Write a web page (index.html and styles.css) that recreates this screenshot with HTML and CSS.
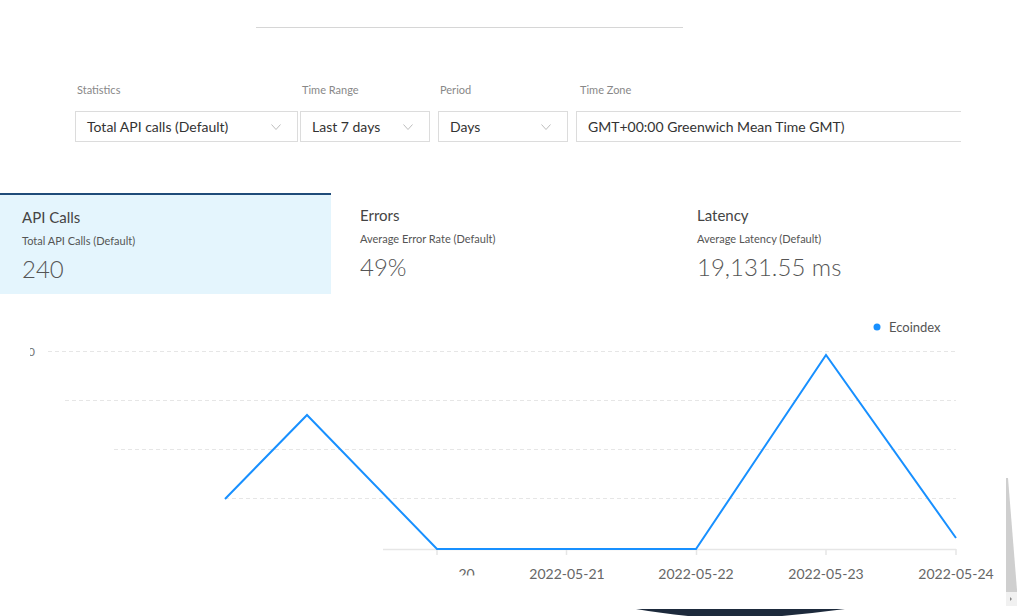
FILE: index.html
```html
<!DOCTYPE html>
<html>
<head>
<meta charset="utf-8">
<link rel="stylesheet" href="styles.css">
</head>
<body>
<div class="topline"></div>

<div class="filters">
  <div class="field">
    <div class="label">Statistics</div>
    <div class="select s-stat"><span>Total API calls (Default)</span><svg class="chev" width="10" height="6" viewBox="0 0 10 6"><polyline points="0.5,0.5 5,5.5 9.5,0.5"/></svg></div>
  </div>
  <div class="field">
    <div class="label">Time Range</div>
    <div class="select s-small"><span>Last 7 days</span><svg class="chev" width="10" height="6" viewBox="0 0 10 6"><polyline points="0.5,0.5 5,5.5 9.5,0.5"/></svg></div>
  </div>
  <div class="field">
    <div class="label">Period</div>
    <div class="select s-small"><span>Days</span><svg class="chev" width="10" height="6" viewBox="0 0 10 6"><polyline points="0.5,0.5 5,5.5 9.5,0.5"/></svg></div>
  </div>
  <div class="field">
    <div class="label label-tz">Time Zone</div>
    <div class="select s-tz"><span>GMT+00:00 Greenwich Mean Time GMT)</span></div>
  </div>
</div>

<div class="tabs">
  <div class="tab tab-active">
    <div class="tab-title">API Calls</div>
    <div class="tab-sub">Total API Calls (Default)</div>
    <div class="tab-value">240</div>
  </div>
  <div class="tab">
    <div class="tab-title">Errors</div>
    <div class="tab-sub">Average Error Rate (Default)</div>
    <div class="tab-value">49%</div>
  </div>
  <div class="tab">
    <div class="tab-title">Latency</div>
    <div class="tab-sub">Average Latency (Default)</div>
    <div class="tab-value">19,131.55 ms</div>
  </div>
</div>

<svg class="chart" width="1018" height="322" viewBox="0 294 1018 322">
  <defs>
    <clipPath id="clipY"><rect x="30" y="340" width="10" height="20"/></clipPath>
    <clipPath id="clipX"><rect x="458" y="560" width="30" height="15.5"/></clipPath>
  </defs>
  <circle cx="877" cy="327" r="3.5" fill="#1890ff"/>
  <text x="889" y="332" class="legend">Ecoindex</text>

  <text x="35" y="356" class="ylab" clip-path="url(#clipY)" text-anchor="end">0</text>

  <g class="grid">
    <line x1="48" y1="351.5" x2="956" y2="351.5"/>
    <line x1="65" y1="400.5" x2="956" y2="400.5"/>
    <line x1="114" y1="449.5" x2="956" y2="449.5"/>
    <line x1="225" y1="498.5" x2="956" y2="498.5"/>
  </g>
  <g class="axis">
    <line x1="383" y1="549.5" x2="956" y2="549.5"/>
    <line x1="437" y1="549" x2="437" y2="555"/>
    <line x1="566.5" y1="549" x2="566.5" y2="555"/>
    <line x1="696.5" y1="549" x2="696.5" y2="555"/>
    <line x1="826" y1="549" x2="826" y2="555"/>
    <line x1="956" y1="549" x2="956" y2="555"/>
  </g>
  <polyline class="series" points="225,499 307,415 437,549 696,549 826,355 956,538"/>

  <g class="xlab">
    <text x="437" y="579" text-anchor="middle" clip-path="url(#clipX)">2022-05-20</text>
    <text x="567" y="579" text-anchor="middle">2022-05-21</text>
    <text x="696" y="579" text-anchor="middle">2022-05-22</text>
    <text x="826" y="579" text-anchor="middle">2022-05-23</text>
    <text x="956" y="579" text-anchor="middle">2022-05-24</text>
  </g>

  <path class="navy" d="M636 609 L845 609 Q 815 613 782 616 L688 616 Q 660 613 636 609 Z"/>
  <path class="scroll" d="M1006 478 L1008 478 L1017 590 L1017 606 L1006 606 Z"/>
  <rect x="1006" y="592" width="11" height="14" fill="#f1f1f1"/>
  <path d="M1010 597 L1012 599 L1010 601 Z" fill="#888"/>
</svg>
</body>
</html>
```

FILE: styles.css
```css
html, body {
  margin: 0;
  padding: 0;
}
body {
  width: 1018px;
  height: 616px;
  overflow: hidden;
  background: #ffffff;
  font-family: Lato, "Noto Sans", "Liberation Sans", sans-serif;
  color: #333;
}
.topline {
  margin: 27px 0 0 256px;
  width: 427px;
  height: 1px;
  background: #d6d6d6;
}
.filters {
  display: grid;
  grid-template-columns: 225px 138px 138px 384px;
  margin: 55px 0 0 75px;
}
.field {
  display: flex;
  flex-direction: column;
  gap: 14px;
}
.label {
  font-size: 11px;
  line-height: 14px;
  color: #888;
  padding-left: 2px;
}
.label-tz {
  padding-left: 4px;
}
.select {
  box-sizing: border-box;
  height: 31px;
  border: 1px solid #dcdcdc;
  display: flex;
  align-items: center;
  justify-content: space-between;
  padding: 0 16px 0 11px;
  font-size: 14px;
  color: #333;
  background: #fff;
}
.s-stat {
  width: 223px;
}
.s-small {
  width: 130px;
}
.s-tz {
  width: 385px;
  border-right: none;
}
.chev {
  display: block;
}
.chev polyline {
  fill: none;
  stroke: #bdbdbd;
  stroke-width: 1;
}
.tabs {
  display: grid;
  grid-template-columns: 331px 337px 350px;
  margin-top: 51px;
  height: 101px;
}
.tab {
  box-sizing: border-box;
  padding: 12px 0 0 29px;
}
.tab-active {
  background: #e4f5fd;
  border-top: 2px solid #1f4b79;
  padding-left: 22px;
}
.tab-title {
  font-size: 15px;
  line-height: 20px;
  color: #444;
}
.tab-sub {
  margin-top: 7px;
  font-size: 11px;
  line-height: 14px;
  color: #555;
}
.tab-value {
  margin-top: 6px;
  font-size: 24px;
  line-height: 30px;
  font-weight: 300;
  color: #555;
}
.chart {
  display: block;
}
.legend {
  font-size: 13px;
  fill: #555;
  font-family: Lato, "Noto Sans", sans-serif;
}
.ylab {
  font-size: 12px;
  fill: #777;
  font-family: Lato, "Noto Sans", sans-serif;
}
.grid line {
  stroke: #e6e6e6;
  stroke-width: 1;
  stroke-dasharray: 4 3;
}
.axis line {
  stroke: #e6e6e6;
  stroke-width: 1.5;
}
.series {
  fill: none;
  stroke: #1890ff;
  stroke-width: 2;
  stroke-linejoin: miter;
}
.xlab text {
  font-size: 14px;
  fill: #666;
  font-family: Lato, "Noto Sans", sans-serif;
}
.navy {
  fill: #1d2a3c;
}
.scroll {
  fill: #cfcfcf;
}
```
